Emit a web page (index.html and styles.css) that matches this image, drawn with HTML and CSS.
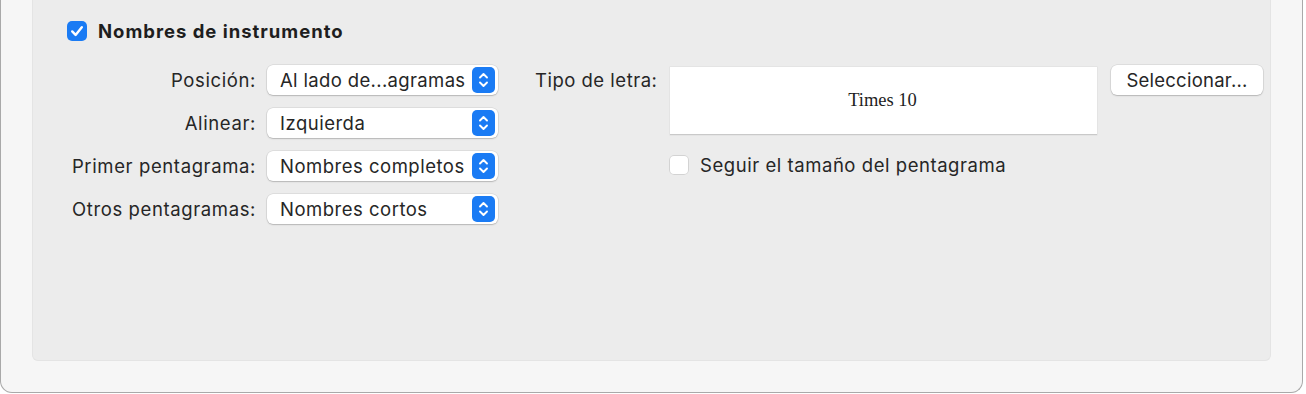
FILE: index.html
```html
<!DOCTYPE html>
<html lang="es">
<head>
<meta charset="utf-8">
<title>Nombres de instrumento</title>
<link rel="stylesheet" href="styles.css">
</head>
<body>
<div class="window">
  <div class="panel">
    <div class="title-row">
      <span class="check checked">
        <svg width="20" height="20" viewBox="0 0 20 20"><path d="M5.2 10.4 L8.6 13.9 L14.8 6.3" fill="none" stroke="#fff" stroke-width="2.4" stroke-linecap="round" stroke-linejoin="round"/></svg>
      </span>
      <span class="title">Nombres de instrumento</span>
    </div>
    <div class="content">
      <div class="form-left">
        <label class="lbl">Posición:</label>
        <div class="popup"><span class="popup-text tight">Al lado de...agramas</span><span class="stepper"><svg width="23" height="26" viewBox="0 0 23 26"><path d="M8 10.5 L11.5 7 L15 10.5 M8 15.5 L11.5 19 L15 15.5" fill="none" stroke="#fff" stroke-width="1.9" stroke-linecap="round" stroke-linejoin="round"/></svg></span></div>
        <label class="lbl">Alinear:</label>
        <div class="popup"><span class="popup-text">Izquierda</span><span class="stepper"><svg width="23" height="26" viewBox="0 0 23 26"><path d="M8 10.5 L11.5 7 L15 10.5 M8 15.5 L11.5 19 L15 15.5" fill="none" stroke="#fff" stroke-width="1.9" stroke-linecap="round" stroke-linejoin="round"/></svg></span></div>
        <label class="lbl">Primer pentagrama:</label>
        <div class="popup"><span class="popup-text">Nombres completos</span><span class="stepper"><svg width="23" height="26" viewBox="0 0 23 26"><path d="M8 10.5 L11.5 7 L15 10.5 M8 15.5 L11.5 19 L15 15.5" fill="none" stroke="#fff" stroke-width="1.9" stroke-linecap="round" stroke-linejoin="round"/></svg></span></div>
        <label class="lbl">Otros pentagramas:</label>
        <div class="popup"><span class="popup-text">Nombres cortos</span><span class="stepper"><svg width="23" height="26" viewBox="0 0 23 26"><path d="M8 10.5 L11.5 7 L15 10.5 M8 15.5 L11.5 19 L15 15.5" fill="none" stroke="#fff" stroke-width="1.9" stroke-linecap="round" stroke-linejoin="round"/></svg></span></div>
      </div>
      <div class="form-right">
        <label class="lbl font-lbl">Tipo de letra:</label>
        <div class="font-box">Times 10</div>
        <button class="btn">Seleccionar...</button>
        <div class="follow">
          <span class="check"></span>
          <span class="follow-text">Seguir el tamaño del pentagrama</span>
        </div>
      </div>
    </div>
  </div>
</div>
</body>
</html>
```
FILE: styles.css
```css
* { box-sizing: border-box; }
html, body { margin: 0; padding: 0; background: #ffffff; }
body {
  font-family: "Inter", "Liberation Sans", sans-serif;
  color: #262626;
  width: 1306px;
  height: 394px;
  overflow: hidden;
}
.window {
  width: 1303px;
  height: 393px;
  background: #f6f6f6;
  border: 1px solid #a9a9a9;
  border-top: none;
  border-radius: 0 0 12px 12px;
  padding: 0 31px 31px 31px;
}
.panel {
  height: 100%;
  background: #ececec;
  border: 1px solid #e4e4e4;
  border-top: none;
  border-radius: 0 0 6px 6px;
  padding: 21px 0 0 34px;
}
.title-row {
  display: flex;
  align-items: center;
  height: 20px;
}
.check {
  width: 20px;
  height: 20px;
  border-radius: 5px;
  background: #ffffff;
  box-shadow: inset 0 0 0 1px #d3d3d3;
  display: inline-flex;
  flex: none;
}
.check.checked {
  background: #1a7bf4;
  box-shadow: none;
}
.title {
  margin-left: 11px;
  font-weight: 700;
  font-size: 18.5px;
  color: #1e1e1e;
  letter-spacing: 0.98px;
}
.content {
  display: flex;
  margin-top: 24px;
}
.form-left {
  display: grid;
  grid-template-columns: 189px 231px;
  column-gap: 11px;
  row-gap: 13px;
  grid-auto-rows: 30px;
  align-items: center;
}
.lbl {
  text-align: right;
  font-size: 18.5px;
  letter-spacing: 0.62px;
  color: #262626;
  white-space: nowrap;
}
.popup {
  height: 30px;
  background: #ffffff;
  border-radius: 6px;
  box-shadow: 0 0 0 0.5px rgba(0,0,0,0.12), 0 1px 1.5px rgba(0,0,0,0.18);
  display: flex;
  align-items: center;
  justify-content: space-between;
  padding: 0 3px 0 13px;
}
.popup-text {
  font-size: 18.5px;
  letter-spacing: 0.5px;
  color: #262626;
  white-space: nowrap;
}
.popup-text.tight {
  letter-spacing: 0.35px;
}
.stepper {
  width: 23px;
  height: 26px;
  background: #1a7bf4;
  border-radius: 5px;
  display: flex;
  flex: none;
}
.form-right {
  margin-left: 37px;
  display: grid;
  grid-template-columns: 120px 428px 152px;
  grid-template-rows: 70px 30px;
  column-gap: 14px;
  row-gap: 19px;
  align-items: start;
}
.font-lbl {
  text-align: left;
  line-height: 30px;
  letter-spacing: 0.5px;
}
.font-box {
  margin-top: 2px;
  margin-left: 1px;
  height: 68px;
  background: #ffffff;
  border-bottom: 1.5px solid #c9c9c9;
  box-shadow: 0 0 0 0.5px #dcdcdc;
  display: flex;
  align-items: center;
  justify-content: center;
  font-family: "Liberation Serif", serif;
  font-size: 18.5px;
  color: #1e1e1e;
  padding-right: 2px;
}
.btn {
  height: 30px;
  border: none;
  background: #ffffff;
  border-radius: 6px;
  box-shadow: 0 0 0 0.5px rgba(0,0,0,0.12), 0 1px 1.5px rgba(0,0,0,0.18);
  font-family: "Inter", "Liberation Sans", sans-serif;
  font-size: 18.5px;
  letter-spacing: 0.25px;
  color: #262626;
  padding: 0;
}
.follow {
  grid-column: 2 / 4;
  display: flex;
  align-items: center;
  margin-left: 0;
}
.follow-text {
  margin-left: 11px;
  font-size: 18.5px;
  letter-spacing: 0.55px;
  color: #262626;
  white-space: nowrap;
}
```
